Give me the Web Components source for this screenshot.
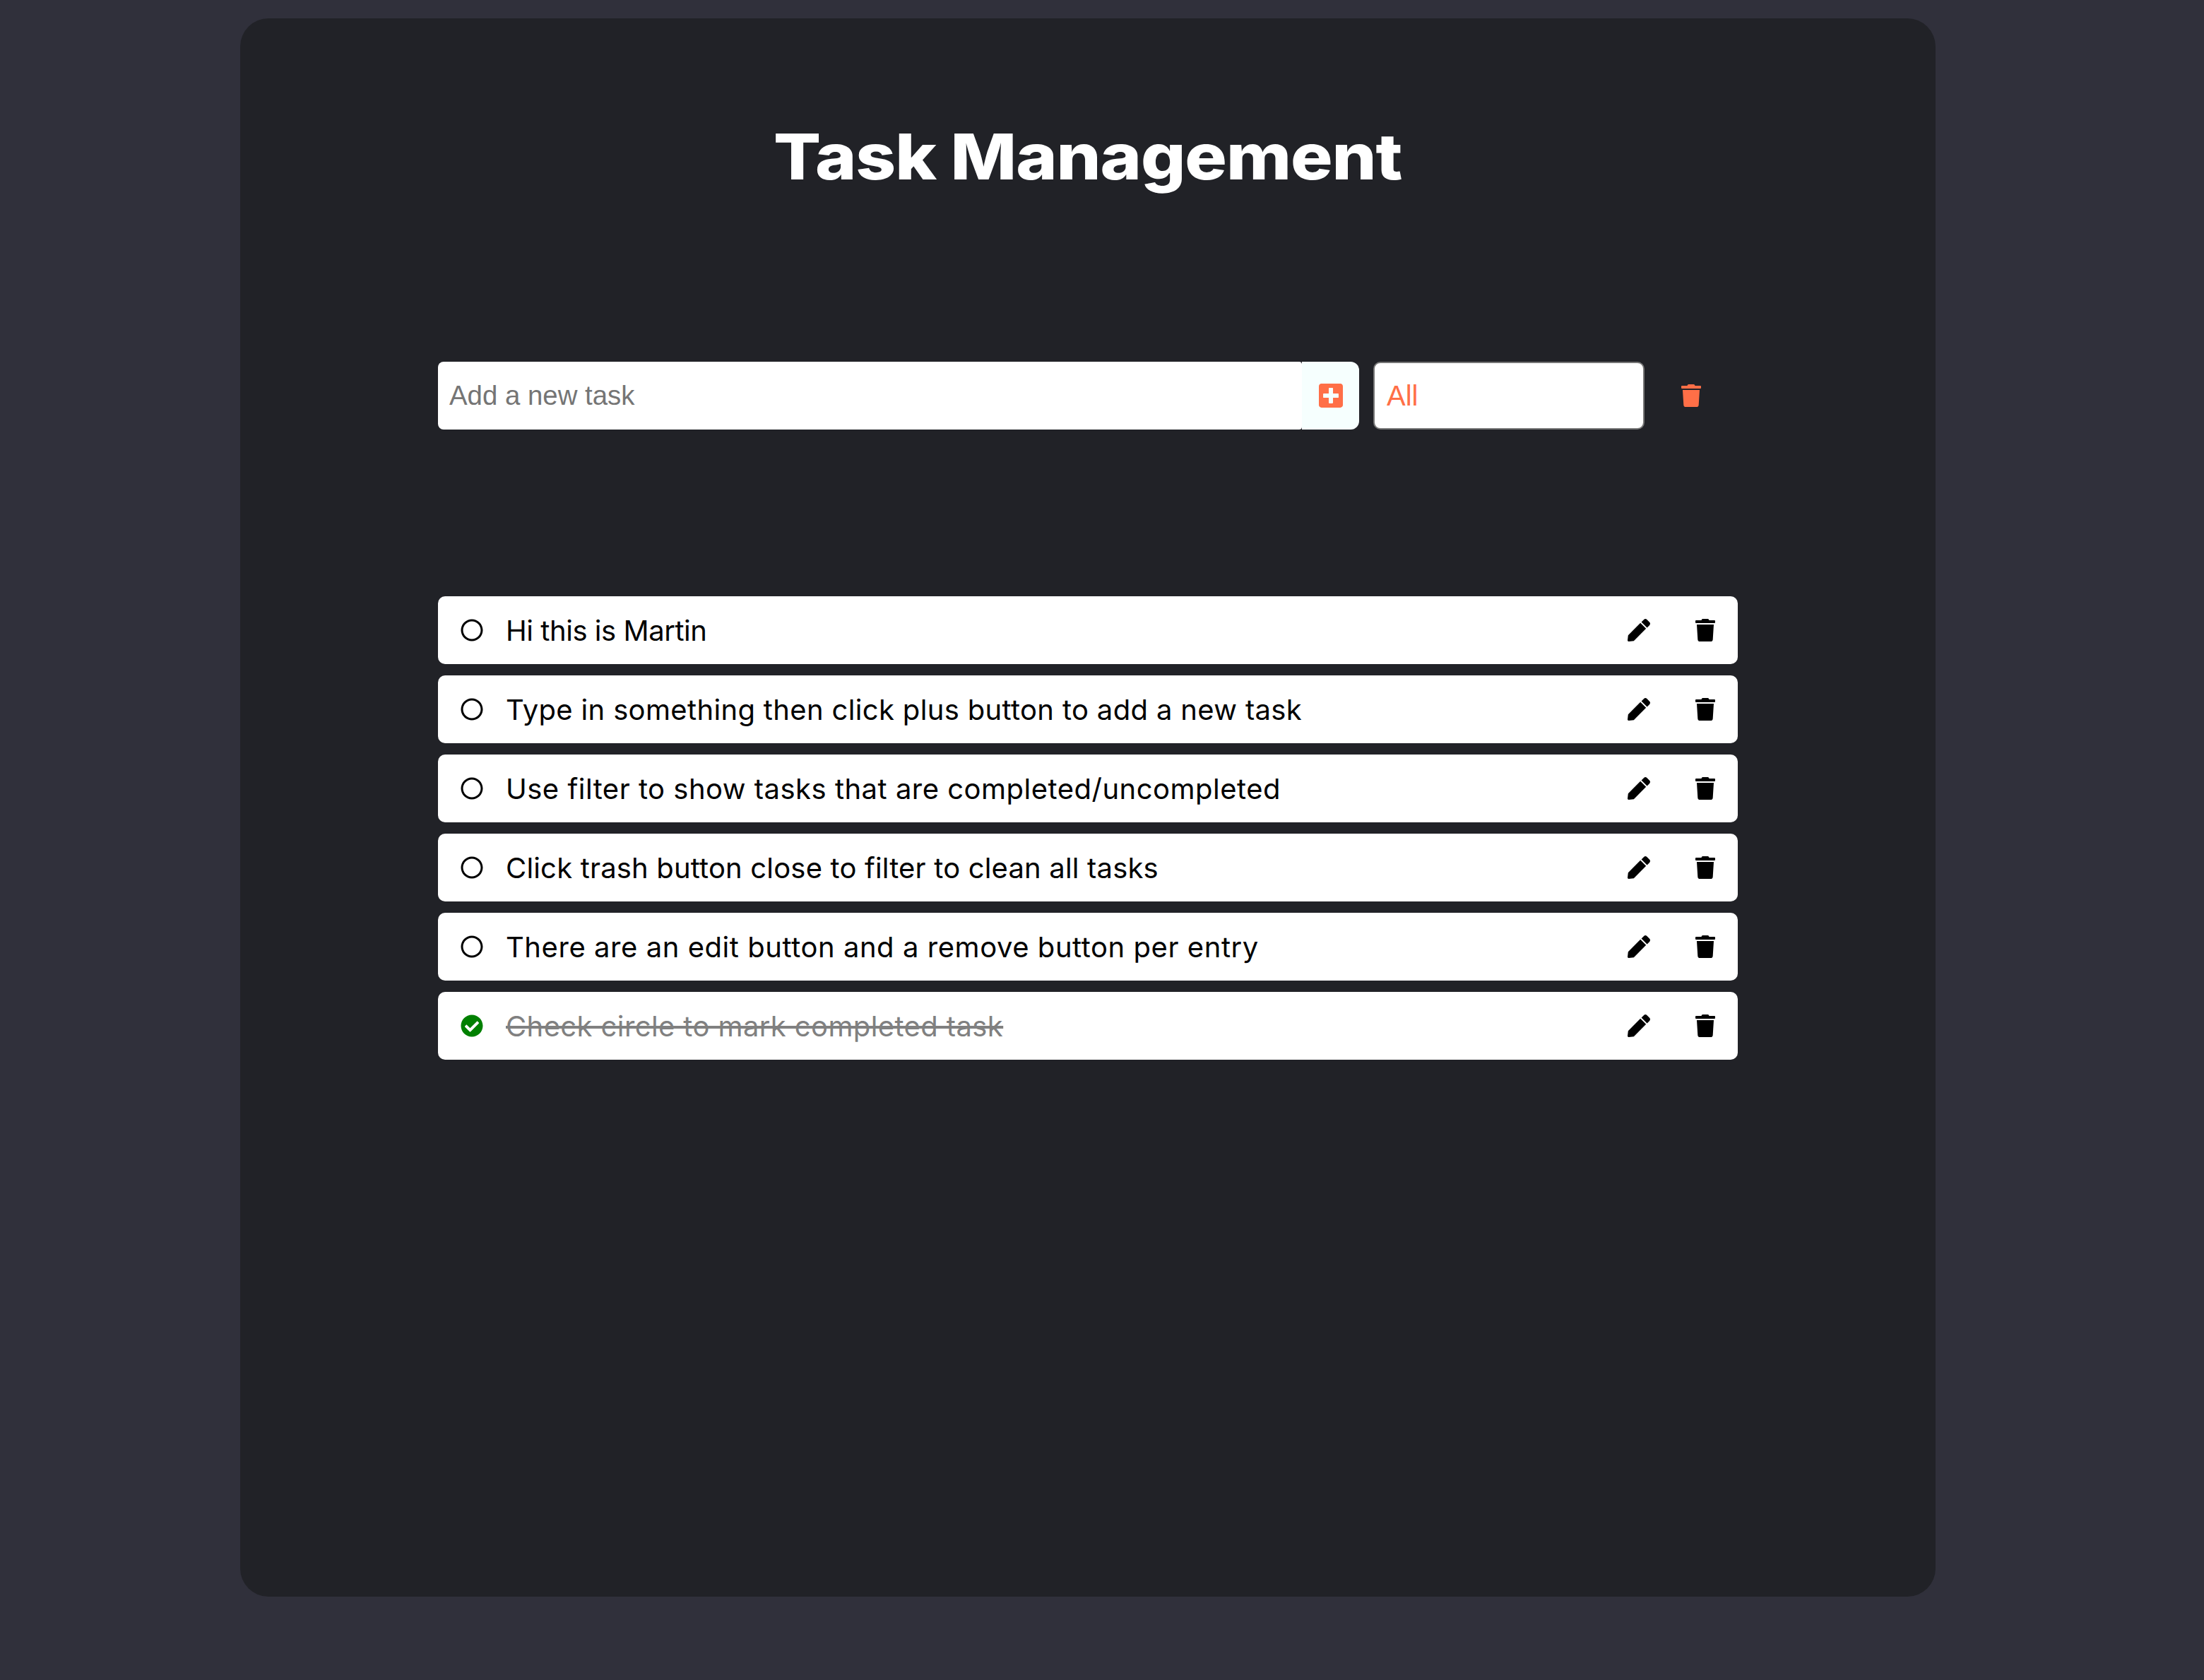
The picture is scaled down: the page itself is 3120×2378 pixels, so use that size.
<!DOCTYPE html>
<html lang="en">
<head>
<meta charset="utf-8">
<title>Task Management</title>
<style>
html, body { margin: 0; background: #30303b; }
body { padding: 26px 40px 118px 0; display: flex; justify-content: center; font-family: Inter, "Liberation Sans", sans-serif; }
</style>
</head>
<body>
<task-app>
  <task-form slot="form"></task-form>
  <task-item style="--track: -0.45px">Hi this is Martin</task-item>
  <task-item style="--track: 0.34px">Type in something then click plus button to add a new task</task-item>
  <task-item style="--track: 0.49px">Use filter to show tasks that are completed/uncompleted</task-item>
  <task-item style="--track: 0.17px">Click trash button close to filter to clean all tasks</task-item>
  <task-item style="--track: 0.55px">There are an edit button and a remove button per entry</task-item>
  <task-item style="--track: 0.39px" done>Check circle to mark completed task</task-item>
</task-app>

<script>
const ICONS = {
  trash: ["0 0 448 512", "M432 32H312l-9.4-18.7A24 24 0 0 0 281.1 0H166.8a23.72 23.72 0 0 0-21.4 13.3L136 32H16A16 16 0 0 0 0 48v32a16 16 0 0 0 16 16h416a16 16 0 0 0 16-16V48a16 16 0 0 0-16-16zM53.2 467a48 48 0 0 0 47.9 45h245.8a48 48 0 0 0 47.9-45L416 128H32z"],
  pen: ["0 0 512 512", "M290.74 93.24l128.02 128.02-277.99 277.99-114.14 12.6C11.35 513.54-1.56 500.62.14 485.34l12.7-114.22 277.9-278.88zm207.2-19.06l-60.11-60.11c-18.75-18.75-49.16-18.75-67.91 0l-56.55 56.55 128.02 128.02 56.55-56.55c18.75-18.76 18.75-49.16 0-67.91z"],
  plus: ["0 32 448 448", "M400 32H48C21.5 32 0 53.5 0 80v352c0 26.5 21.5 48 48 48h352c26.5 0 48-21.5 48-48V80c0-26.5-21.5-48-48-48zm-32 252c0 6.6-5.4 12-12 12h-92v92c0 6.6-5.4 12-12 12h-56c-6.6 0-12-5.4-12-12v-92H92c-6.6 0-12-5.4-12-12v-56c0-6.6 5.4-12 12-12h92v-92c0-6.6 5.4-12 12-12h56c6.6 0 12 5.4 12 12v92h92c6.6 0 12 5.4 12 12v56z"],
  circle: ["0 0 512 512", "M256 8C119 8 8 119 8 256s111 248 248 248 248-111 248-248S393 8 256 8zm0 448c-110.5 0-200-89.5-200-200S145.5 56 256 56s200 89.5 200 200-89.5 200-200 200z"],
  check: ["0 0 512 512", "M504 256c0 136.967-111.033 248-248 248S8 392.967 8 256 119.033 8 256 8s248 111.033 248 248zM227.314 387.314l184-184c6.248-6.248 6.248-16.379 0-22.627l-22.627-22.627c-6.248-6.249-16.379-6.249-22.628 0L216 308.118l-70.059-70.059c-6.248-6.248-16.379-6.248-22.628 0l-22.627 22.627c-6.248 6.248-6.248 16.379 0 22.627l104 104c6.249 6.249 16.379 6.249 22.628.001z"]
};

class FaIcon extends HTMLElement {
  connectedCallback() {
    if (this.shadowRoot) return;
    const [box, d] = ICONS[this.getAttribute("name")];
    const [, , w, h] = box.split(" ");
    const height = this.getAttribute("size") || 32;
    this.attachShadow({ mode: "open" }).innerHTML = `
      <style>:host { display: block; line-height: 0; } svg { fill: currentColor; display: block; }</style>
      <svg viewBox="${box}" height="${height}" width="${height * w / h}"><path d="${d}"/></svg>`;
  }
}
customElements.define("fa-icon", FaIcon);

const appTemplate = document.createElement("template");
appTemplate.innerHTML = `
<style>
:host { display: block; width: 2400px; height: 2234px; box-sizing: border-box; padding: 124px 280px 0; background: #212227; border-radius: 40px; }
h1 { margin: 0; height: 144px; text-align: center; color: #fff; font: 800 90px/144px Inter, "Liberation Sans", sans-serif; letter-spacing: -1px; }
h1 span { display: inline-block; transform: scaleX(1.104); }
.form { display: block; margin-top: 218px; }
.list { display: flex; flex-direction: column; gap: 16px; margin-top: 236px; }
</style>
<h1><span>Task Management</span></h1>
<div class="form"><slot name="form"></slot></div>
<div class="list"><slot></slot></div>
`;
class TaskApp extends HTMLElement {
  constructor() {
    super();
    this.attachShadow({ mode: "open" });
    this.shadowRoot.appendChild(appTemplate.content.cloneNode(true));
  }
}
customElements.define("task-app", TaskApp);

const formTemplate = document.createElement("template");
formTemplate.innerHTML = `
<style>
:host { display: flex; align-items: center; height: 96px; }
input { flex: none; width: 1223px; height: 96px; box-sizing: border-box; padding: 0 16px; border: 0; outline: 0; border-radius: 8px 4px 4px 8px; background: #fff; font: 38.4px "Liberation Sans", Arial, sans-serif; }
input::placeholder { color: #757575; opacity: 1; }
button { border: 0; padding: 0; background: none; display: flex; align-items: center; justify-content: center; }
.add { width: 81px; height: 96px; background: #f6fffe; border-radius: 0 12px 12px 0; color: #ff6f47; }
select { appearance: none; width: 384px; height: 96px; box-sizing: border-box; margin-left: 20px; padding: 0 17px; border: 2px solid #767676; border-radius: 10px; background: #fff; color: #ff6f47; font: 40px "Liberation Sans", Arial, sans-serif; }
.clear { width: 28px; height: 96px; margin-left: 52px; color: #ff6f47; }
</style>
<input type="text" placeholder="Add a new task">
<button class="add"><fa-icon name="plus" size="34"></fa-icon></button>
<select><option>All</option><option>Completed</option><option>Uncompleted</option></select>
<button class="clear"><fa-icon name="trash"></fa-icon></button>
`;
class TaskForm extends HTMLElement {
  constructor() {
    super();
    this.attachShadow({ mode: "open" });
    this.shadowRoot.appendChild(formTemplate.content.cloneNode(true));
  }
}
customElements.define("task-form", TaskForm);

const itemTemplate = document.createElement("template");
itemTemplate.innerHTML = `
<style>
:host { display: flex; align-items: center; height: 96px; box-sizing: border-box; padding: 0 32px; background: #fff; border-radius: 10px; color: #000; font: 400 40px Inter, "Liberation Sans", sans-serif; letter-spacing: var(--track, 0); }
.check { flex: none; width: 32px; margin-right: 32px; }
.text { flex: 1; white-space: nowrap; }
.pen { flex: none; }
.trash { flex: none; margin-left: 64px; }
:host([done]) .text { color: #808080; text-decoration: line-through; }
:host([done]) .check { color: green; }
</style>
<span class="text"><slot></slot></span>
<fa-icon class="pen" name="pen"></fa-icon>
<fa-icon class="trash" name="trash"></fa-icon>
`;
class TaskItem extends HTMLElement {
  constructor() {
    super();
    this.attachShadow({ mode: "open" });
    this.shadowRoot.appendChild(itemTemplate.content.cloneNode(true));
    const check = document.createElement("fa-icon");
    check.className = "check";
    check.setAttribute("name", this.hasAttribute("done") ? "check" : "circle");
    this.shadowRoot.querySelector(".text").before(check);
  }
}
customElements.define("task-item", TaskItem);
</script>
</body>
</html>
